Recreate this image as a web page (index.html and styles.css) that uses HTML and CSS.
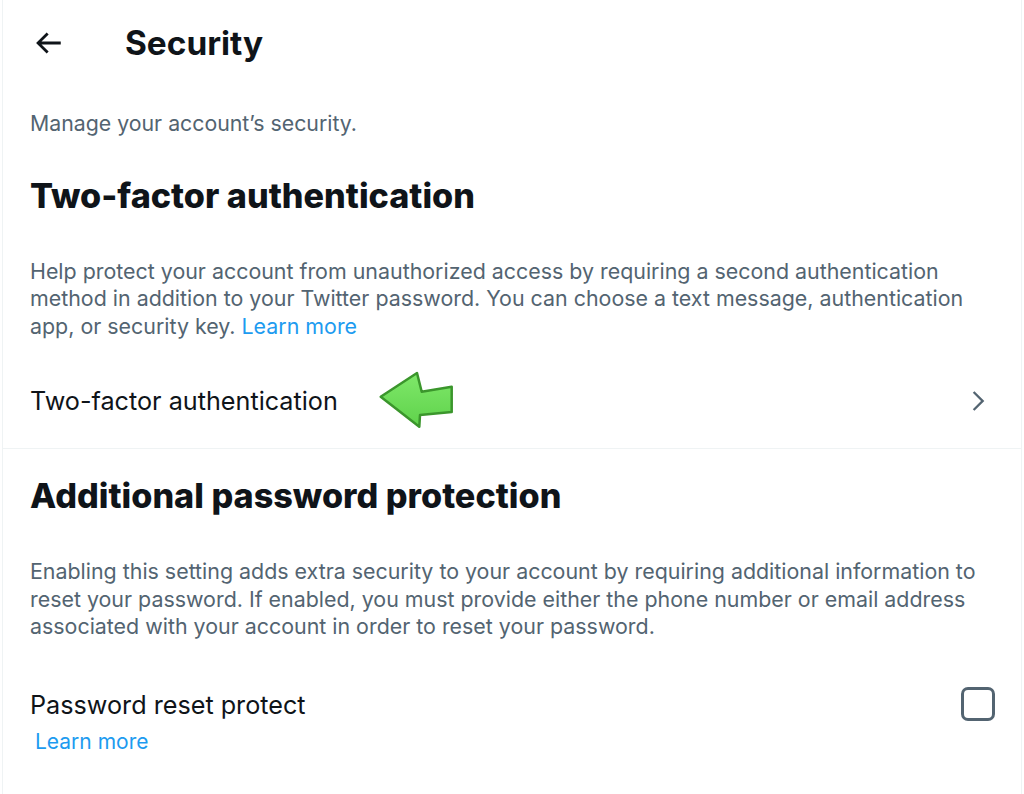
FILE: index.html
```html
<!DOCTYPE html>
<html lang="en">
<head>
<meta charset="utf-8">
<title>Security</title>
<link rel="stylesheet" href="styles.css">
</head>
<body>
<div class="panel">
  <header class="topbar">
    <div class="back">
      <svg viewBox="0 0 24 24" width="34" height="34"><path d="M7.414 13l5.043 5.04-1.414 1.42L3.586 12l7.457-7.46 1.414 1.42L7.414 11H21v2H7.414z"/></svg>
    </div>
    <h1 class="title">Security</h1>
  </header>
  <p class="intro">Manage your account’s security.</p>

  <section class="block">
    <h2 class="heading">Two-factor authentication</h2>
    <p class="desc">Help protect your account from unauthorized access by requiring a second authentication<br>method in addition to your Twitter password. You can choose a text message, authentication<br>app, or security key. <a class="link" href="#">Learn more</a></p>
    <div class="row">
      <span class="row-label">Two-factor authentication</span>
      <svg class="chev" viewBox="0 0 24 24" width="28" height="28"><path d="M14.586 12L7.543 4.96l1.414-1.42L17.414 12l-8.457 8.46-1.414-1.42L14.586 12z"/></svg>
      <svg class="pointer" viewBox="0 0 80 64" width="80" height="64">
        <defs>
          <linearGradient id="g" x1="0" y1="0" x2="0" y2="1">
            <stop offset="0" stop-color="#7fe86a"/>
            <stop offset="1" stop-color="#5fd24b"/>
          </linearGradient>
        </defs>
        <polygon points="4.7,28.7 41,5 45.7,23.7 75.7,18.7 75.7,44 44,47 43.3,58.7" fill="url(#g)" stroke="#3b962c" stroke-width="2.5" stroke-linejoin="round"/>
      </svg>
    </div>
  </section>

  <section class="block second">
    <h2 class="heading">Additional password protection</h2>
    <p class="desc">Enabling this setting adds extra security to your account by requiring additional information to<br>reset your password. If enabled, you must provide either the phone number or email address<br>associated with your account in order to reset your password.</p>
    <div class="check-row">
      <div class="check-text">
        <div class="row-label">Password reset protect</div>
        <a class="link more" href="#">Learn more</a>
      </div>
      <span class="box"></span>
    </div>
  </section>
</div>
</body>
</html>
```

FILE: styles.css
```css
* { box-sizing: border-box; }
html, body { margin: 0; padding: 0; background: #fff; }
body {
  font-family: Inter, "Noto Sans", "Liberation Sans", sans-serif;
  color: #0f1419;
  width: 1024px;
  height: 794px;
  overflow: hidden;
}
.panel {
  margin-left: 2px;
  width: 1020px;
  height: 794px;
  border-left: 1px solid #eff3f4;
  border-right: 1px solid #eff3f4;
}
.topbar {
  height: 86px;
  display: flex;
  align-items: center;
  padding-left: 24px;
}
.back {
  width: 42px;
  height: 42px;
  display: flex;
  align-items: center;
  justify-content: center;
  fill: #0f1419;
}
.title {
  margin: 0 0 0 56px;
  font-size: 33.4px;
  font-weight: 700;
  line-height: 40px;
}
.intro {
  margin: 24px 0 0 0;
  padding-left: 27px;
  font-size: 21.3px;
  line-height: 27.5px;
  color: #536471;
}
.heading {
  margin: 0;
  padding-left: 27px;
  font-size: 34.2px;
  font-weight: 800;
  line-height: 40px;
}
.block { padding-top: 38px; }
.block.second { padding-top: 27px; }
.desc {
  margin: 42px 0 0 0;
  padding-left: 27px;
  font-size: 21.4px;
  line-height: 27.5px;
  color: #536471;
  white-space: nowrap;
}
.second .desc { margin-top: 42px; }
.link { color: #1d9bf0; text-decoration: none; }
.row {
  position: relative;
  margin-top: 13px;
  height: 96px;
  display: flex;
  align-items: center;
  justify-content: space-between;
  padding: 0 29px 0 27px;
  border-bottom: 1px solid #eff3f4;
}
.row-label {
  font-size: 25.2px;
  line-height: 30px;
  color: #0f1419;
}
.chev { fill: #536471; }
.pointer {
  position: absolute;
  left: 373px;
  top: 15px;
}
.check-row {
  margin-top: 49px;
  display: flex;
  justify-content: space-between;
  align-items: flex-start;
  padding: 0 26px 0 27px;
}
.check-text { display: flex; flex-direction: column; }
.more {
  margin-top: 8px;
  margin-left: 5px;
  font-size: 21px;
  line-height: 27.5px;
}
.box {
  margin-top: -3px;
  width: 34px;
  height: 34px;
  border: 3px solid #536471;
  border-radius: 7px;
}
```
